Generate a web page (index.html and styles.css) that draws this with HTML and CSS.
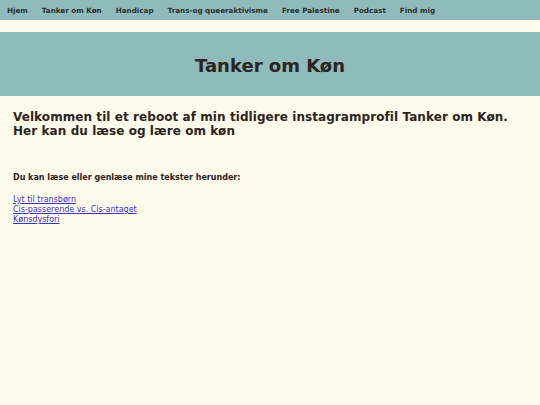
FILE: index.html
```html
<!DOCTYPE html>
<html lang="da">
<head>
<meta charset="utf-8">
<title>Tanker om Køn</title>
<link rel="stylesheet" href="styles.css">
</head>
<body>
<nav class="topnav">
  <a href="#">Hjem</a>
  <a href="#">Tanker om Køn</a>
  <a href="#">Handicap</a>
  <a href="#">Trans-og queeraktivisme</a>
  <a href="#">Free Palestine</a>
  <a href="#">Podcast</a>
  <a href="#">Find mig</a>
</nav>
<header class="banner">
  <h1>Tanker om Køn</h1>
</header>
<main class="content">
  <h2>Velkommen til et reboot af min tidligere instagramprofil Tanker om Køn. Her kan du læse og lære om køn</h2>
  <p class="lead">Du kan læse eller genlæse mine tekster herunder:</p>
  <ul class="links">
    <li><a href="#">Lyt til transbørn</a></li>
    <li><a href="#">Cis-passerende vs. Cis-antaget</a></li>
    <li><a href="#">Kønsdysfori</a></li>
  </ul>
</main>
</body>
</html>
```

FILE: styles.css
```css
html, body {
  margin: 0;
  padding: 0;
}
body {
  background: #fefaec;
  color: #2d2420;
  font-family: "DejaVu Sans", Verdana, sans-serif;
}
.topnav {
  display: flex;
  align-items: center;
  height: 20px;
  background: #8fbbbc;
  padding-left: 0;
}
.topnav a {
  font-size: 7.2px;
  font-weight: bold;
  color: #2d2d2d;
  text-decoration: none;
  padding: 0 7px;
}
.banner {
  margin-top: 12px;
  height: 64px;
  background: #8fbbbc;
  display: flex;
  align-items: center;
  justify-content: center;
}
.banner h1 {
  margin: 0;
  padding-top: 2px;
  font-size: 18px;
  font-weight: bold;
  color: #2b2420;
}
.content {
  padding: 0 13px;
}
.content h2 {
  margin: 14px 0 0;
  font-size: 12px;
  letter-spacing: 0.07px;
  font-weight: bold;
}
.lead {
  margin: 35px 0 0;
  font-size: 8px;
  font-weight: bold;
}
.links {
  list-style: none;
  margin: 13px 0 0;
  padding: 0;
  font-size: 8px;
  line-height: 10px;
}
.links a {
  color: #3535c4;
}
```
